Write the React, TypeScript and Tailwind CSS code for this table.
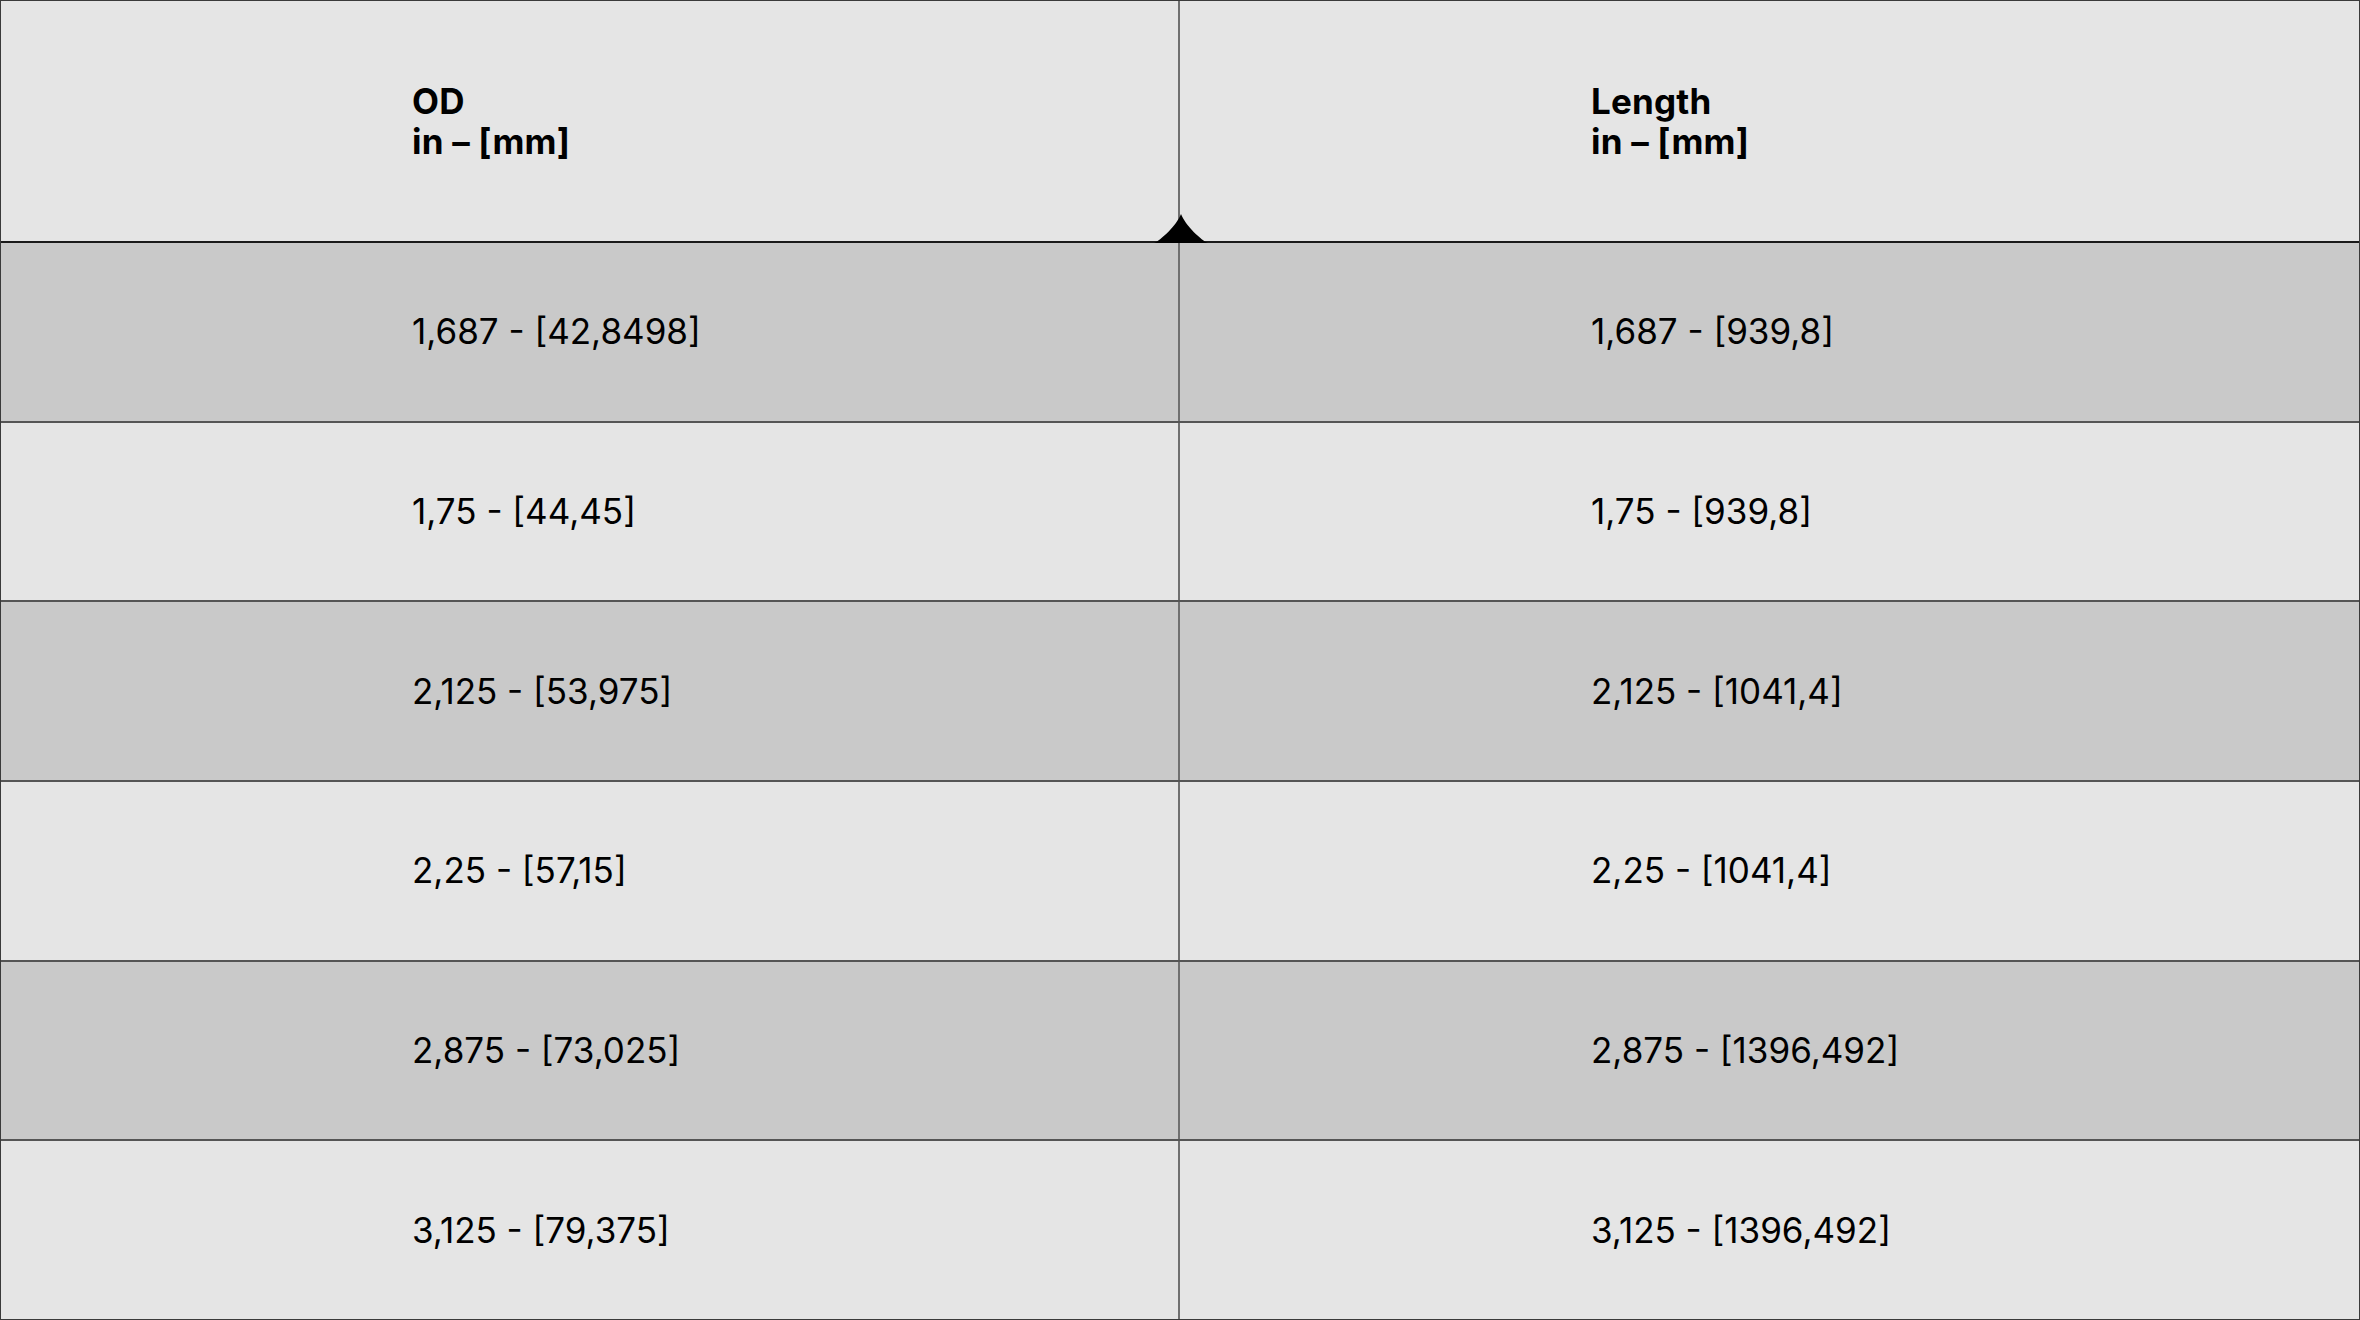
const rows = [
  ["1,687 - [42,8498]", "1,687 - [939,8]"],
  ["1,75 - [44,45]", "1,75 - [939,8]"],
  ["2,125 - [53,975]", "2,125 - [1041,4]"],
  ["2,25 - [57,15]", "2,25 - [1041,4]"],
  ["2,875 - [73,025]", "2,875 - [1396,492]"],
  ["3,125 - [79,375]", "3,125 - [1396,492]"],
];

export default function App() {
  return (
    <div className="flex h-[1320px] w-[2360px] flex-col border border-[#3a3a3a] bg-[#e5e5e5] font-['Inter',sans-serif] text-black">
      {/* header */}
      <div className="relative flex h-[242px] shrink-0 border-b-2 border-[#1a1a1a]">
        <div className="flex w-[1179px] shrink-0 items-center border-r-2 border-[#707070] pl-[411px]">
          <p className="text-[35px] font-bold leading-[40px] tracking-[0.2px]">
            OD
            <br />
            in – [mm]
          </p>
        </div>
        <div className="flex flex-1 items-center pl-[411px]">
          <p className="text-[35px] font-bold leading-[40px] tracking-[0.2px]">
            Length
            <br />
            in – [mm]
          </p>
        </div>
        {/* junction spike */}
        <svg
          aria-hidden
          className="absolute bottom-[-2px] left-[1153px]"
          width="54"
          height="30"
          viewBox="0 0 54 30"
        >
          <path d="M0 30 C6 28 23 12 27 1 C31 12 48 28 54 30 Z" fill="#000" />
        </svg>
      </div>

      {rows.map((r, i) => (
        <div
          key={i}
          className={`flex flex-1 ${i < rows.length - 1 ? "border-b-2 border-[#555]" : ""} ${
            i % 2 === 0 ? "bg-[#c9c9c9]" : "bg-[#e5e5e5]"
          }`}
        >
          <div className="flex w-[1179px] shrink-0 items-center border-r-2 border-[#707070] pl-[411px]">
            <span className="text-[35px] leading-none">{r[0]}</span>
          </div>
          <div className="flex flex-1 items-center pl-[411px]">
            <span className="text-[35px] leading-none">{r[1]}</span>
          </div>
        </div>
      ))}
    </div>
  );
}
